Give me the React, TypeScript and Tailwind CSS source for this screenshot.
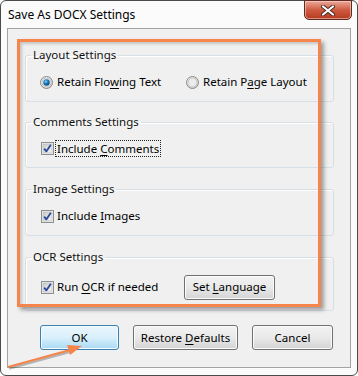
import React from "react";

const font = { fontFamily: '"Noto Sans", "Open Sans", sans-serif' };

function U({ children }: { children: React.ReactNode }) {
  return <span className="underline underline-offset-[2px] decoration-1">{children}</span>;
}

function Radio({ checked }: { checked?: boolean }) {
  return (
    <svg width="13" height="13" viewBox="0 0 13 13" className="shrink-0">
      <defs>
        <linearGradient id="rg" x1="0" y1="0" x2="1" y2="1">
          <stop offset="0" stopColor="#f6f6f6" />
          <stop offset="1" stopColor="#cfcfcf" />
        </linearGradient>
        <radialGradient id="dot" cx="0.4" cy="0.35" r="0.7">
          <stop offset="0" stopColor="#8fd3f5" />
          <stop offset="0.45" stopColor="#1d7bc0" />
          <stop offset="1" stopColor="#0a3f6e" />
        </radialGradient>
      </defs>
      <circle cx="6.5" cy="6.5" r="6" fill="url(#rg)" stroke="#8a8a8a" strokeWidth="1" />
      <circle cx="6.5" cy="6.5" r="4.5" fill="#ececec" stroke="#b9b9b9" strokeWidth="0.8" />
      {checked && <circle cx="6.5" cy="6.5" r="3.2" fill="url(#dot)" />}
    </svg>
  );
}

function Check() {
  return (
    <svg width="13" height="13" viewBox="0 0 13 13" className="shrink-0">
      <defs>
        <linearGradient id="cg" x1="0" y1="0" x2="1" y2="1">
          <stop offset="0" stopColor="#cbcbcb" />
          <stop offset="1" stopColor="#f6f6f6" />
        </linearGradient>
      </defs>
      <rect x="0.5" y="0.5" width="12" height="12" fill="#f4f4f4" stroke="#8e8f8f" />
      <rect x="2" y="2" width="9" height="9" fill="url(#cg)" stroke="#aeb3b9" strokeWidth="0.6" />
      <path d="M3.2 6.6 L5.3 9.4 L9.8 2.8" fill="none" stroke="#2a4a9c" strokeWidth="1.8" strokeLinejoin="round" />
    </svg>
  );
}

function Group({ title, h, pt, children }: { title: string; h: string; pt: string; children: React.ReactNode }) {
  return (
    <fieldset
      className={`ml-[17px] w-[309px] border border-[#d5dfe5] rounded-[3px] shadow-[inset_1px_1px_0_#ffffff] pl-[14px] ${h} ${pt}`}
    >
      <legend className="ml-[-9px] px-[2px] h-[16px] leading-[16px] text-[11.5px] text-[#101010]">{title}</legend>
      {children}
    </fieldset>
  );
}

function Btn({ w, children, primary }: { w: string; children: React.ReactNode; primary?: boolean }) {
  return (
    <div
      className={`${w} h-[25px] rounded-[3px] border flex items-center justify-center text-[11.5px] text-black ${
        primary
          ? "border-[#3c7fb1] bg-linear-to-b from-[#eaf6fd] via-[#d9f0fc] to-[#a9d9f3] shadow-[inset_0_0_0_1px_#f4fbff]"
          : "border-[#707070] bg-linear-to-b from-[#f3f3f3] via-[#e9e9e9] to-[#d4d4d4] shadow-[inset_0_0_0_1px_#fbfbfb]"
      }`}
    >
      <span>{children}</span>
    </div>
  );
}

export default function App() {
  return (
    <div className="w-[358px] h-[376px] bg-white relative overflow-hidden" style={font}>
      <div className="w-[358px] h-[376px] border border-[#4b4b4b] rounded-t-[6px] rounded-b-[6px] bg-[#fbfbfb] flex flex-col relative">
        {/* title bar */}
        <div className="h-[27px] pl-[7px] pt-[6px] text-[12px] leading-[16px] text-black">Save As DOCX Settings</div>
        {/* close button */}
        <div className="absolute top-[-1px] right-[5px] w-[48px] h-[20px] rounded-b-[5px] border border-[#5e2a22] bg-linear-to-b from-[#e9a99a] via-[#cf5a40] to-[#b6391f] shadow-[inset_0_0_0_1px_rgba(255,220,210,0.55)] flex items-center justify-center">
          <svg width="14" height="11" viewBox="0 0 14 11">
            <path d="M2 1.5 L12 9.5 M12 1.5 L2 9.5" stroke="#4a2a25" strokeWidth="4" strokeLinecap="round" />
            <path d="M2 1.5 L12 9.5 M12 1.5 L2 9.5" stroke="#ffffff" strokeWidth="2.2" strokeLinecap="round" />
          </svg>
        </div>
        {/* client area */}
        <div className="mx-[6px] mb-[7px] flex-1 border border-[#a3a3a3] bg-[#f0f0f0] flex flex-col pt-[18px] text-[11.5px] leading-[16px] text-black">
          <Group title="Layout Settings" h="h-[55px]" pt="pt-[11px]">
            <div className="flex items-center h-[16px]">
              <div className="w-[146px] flex items-center gap-[4px]">
                <Radio checked />
                <span>Retain Flo<U>w</U>ing Text</span>
              </div>
              <div className="flex items-center gap-[4px]">
                <Radio />
                <span>Retain P<U>a</U>ge Layout</span>
              </div>
            </div>
          </Group>
          <div className="h-[12px]" />
          <Group title="Comments Settings" h="h-[54px]" pt="pt-[10px]">
            <div className="flex items-center h-[16px] pl-[1px] gap-[2px]">
              <Check />
              <span className="outline-1 outline-dotted outline-[#222] px-[1px] leading-[15px]">
                Include <U>C</U>omments
              </span>
            </div>
          </Group>
          <div className="h-[13px]" />
          <Group title="Image Settings" h="h-[55px]" pt="pt-[11px]">
            <div className="flex items-center h-[16px] pl-[1px] gap-[3px]">
              <Check />
              <span>Include <U>I</U>mages</span>
            </div>
          </Group>
          <div className="h-[13px]" />
          <Group title="OCR Settings" h="h-[62px]" pt="pt-[10px]">
            <div className="flex items-center h-[24px] pl-[1px]">
              <div className="w-[143px] flex items-center gap-[3px]">
                <Check />
                <span>Run <U>O</U>CR if needed</span>
              </div>
              <Btn w="w-[91px]">
                Set <U>L</U>anguage
              </Btn>
            </div>
          </Group>
          <div className="flex mt-[14px] ml-[32px] gap-[14px]">
            <Btn w="w-[79px]" primary>
              OK
            </Btn>
            <Btn w="w-[105px]">
              Restore <U>D</U>efaults
            </Btn>
            <Btn w="w-[81px]">Cancel</Btn>
          </div>
        </div>
      </div>
      {/* orange highlight */}
      <div className="absolute left-[17px] top-[39px] w-[304px] h-[268px] border-[3px] border-[#f5854a] shadow-[3px_3px_4px_rgba(0,0,0,0.35),inset_2px_2px_3px_rgba(0,0,0,0.18)] pointer-events-none" />
      {/* arrow */}
      <svg className="absolute left-0 top-0 pointer-events-none" width="358" height="376">
        <line x1="8" y1="367.5" x2="70" y2="350.5" stroke="rgba(0,0,0,0.25)" strokeWidth="2.5" transform="translate(1,1)" />
        <line x1="8" y1="367" x2="70" y2="350" stroke="#f5854a" strokeWidth="2.2" />
        <polygon points="82,346 70,355 67,345" fill="#f5854a" />
      </svg>
    </div>
  );
}
